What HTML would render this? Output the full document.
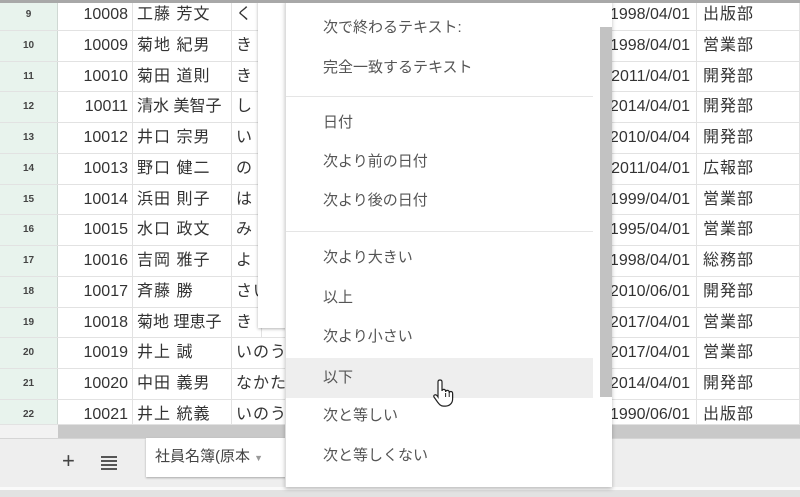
<!DOCTYPE html>
<html><head><meta charset="utf-8"><style>
*{margin:0;padding:0;box-sizing:border-box}
body{width:800px;height:497px;overflow:hidden;background:#fff;position:relative;font-family:"Liberation Sans","Noto Sans CJK JP",sans-serif;color:#333}
.topb{position:absolute;left:0;top:0;width:800px;height:3px;background:#a8a8a8;z-index:5}
.row{position:absolute;left:0;width:800px;height:30.77px;border-bottom:1px solid #e2e2e2;font-size:16px}
.row div{position:absolute;top:0;height:100%;line-height:30px;border-right:1px solid #e2e2e2;white-space:nowrap;overflow:hidden}
.rh{left:0;width:58px;background:#e8f3ed;text-align:center;font-size:10px!important;color:#444;font-weight:bold;border-right:1px solid #cfd8d3!important}
.id{left:58px;width:75px;text-align:right;padding-right:4px}
.nm{left:133px;width:99px;padding-left:4px;letter-spacing:1px}
.kn{left:232px;width:30px;padding-left:4px;letter-spacing:1px}
.dt{left:560px;width:137px}
.dt span{position:absolute;right:6px;top:0}
.dp{left:697px;width:103px;padding-left:6px;letter-spacing:1px}
.hs{position:absolute;left:0;top:425px;width:800px;height:13px;background:#f2f2f2}
.hs i{position:absolute;left:58px;top:0;width:742px;height:13px;background:#c9c9c9}
.tabs{position:absolute;left:0;top:438px;width:800px;height:50px;background:#eeeeee;border-top:1px solid #d5d5d5}
.bb{position:absolute;left:0;top:487px;width:800px;height:10px;background:#e2e2e2;border-top:3px solid #fafafa}
.tab{position:absolute;left:146px;top:438px;width:140px;height:39px;background:#fff;box-shadow:0 1px 2px rgba(0,0,0,.3);font-size:15px;line-height:38px;padding-left:9px;color:#444}
.back{position:absolute;left:258px;top:0;width:40px;height:328px;background:#fff;box-shadow:0 1px 3px rgba(0,0,0,.3)}
.menu{position:absolute;left:285px;top:0;width:327px;height:487px;background:#fff;border-left:1px solid #ddd;box-shadow:0 2px 4px rgba(0,0,0,.25);z-index:3}
.mi{position:absolute;left:0;width:307px;height:40px;line-height:40px;padding-left:37px;font-size:15px;color:#555}
.hr{position:absolute;left:0;width:307px;height:1px;background:#e5e5e5}
.sb{position:absolute;left:314px;top:27px;width:12px;height:370px;background:#c2c2c2}
</style></head><body>
<div class="topb"></div>
<div class="row" style="top:0"><div class="rh">9</div><div class="id">10008</div><div class="nm">工藤 芳文</div><div class="kn">く</div><div class="dt"><span>1998/04/01</span></div><div class="dp">出版部</div></div>
<div class="row" style="top:30.77px"><div class="rh">10</div><div class="id">10009</div><div class="nm">菊地 紀男</div><div class="kn">き</div><div class="dt"><span>1998/04/01</span></div><div class="dp">営業部</div></div>
<div class="row" style="top:61.54px"><div class="rh">11</div><div class="id">10010</div><div class="nm">菊田 道則</div><div class="kn">き</div><div class="dt"><span>2011/04/01</span></div><div class="dp">開発部</div></div>
<div class="row" style="top:92.31px"><div class="rh">12</div><div class="id">10011</div><div class="nm" style="letter-spacing:0">清水 美智子</div><div class="kn">し</div><div class="dt"><span>2014/04/01</span></div><div class="dp">開発部</div></div>
<div class="row" style="top:123.08px"><div class="rh">13</div><div class="id">10012</div><div class="nm">井口 宗男</div><div class="kn">い</div><div class="dt"><span>2010/04/04</span></div><div class="dp">開発部</div></div>
<div class="row" style="top:153.85px"><div class="rh">14</div><div class="id">10013</div><div class="nm">野口 健二</div><div class="kn">の</div><div class="dt"><span>2011/04/01</span></div><div class="dp">広報部</div></div>
<div class="row" style="top:184.62px"><div class="rh">15</div><div class="id">10014</div><div class="nm">浜田 則子</div><div class="kn">は</div><div class="dt"><span>1999/04/01</span></div><div class="dp">営業部</div></div>
<div class="row" style="top:215.39px"><div class="rh">16</div><div class="id">10015</div><div class="nm">水口 政文</div><div class="kn">み</div><div class="dt"><span>1995/04/01</span></div><div class="dp">営業部</div></div>
<div class="row" style="top:246.16px"><div class="rh">17</div><div class="id">10016</div><div class="nm">吉岡 雅子</div><div class="kn">よ</div><div class="dt"><span>1998/04/01</span></div><div class="dp">総務部</div></div>
<div class="row" style="top:276.93px"><div class="rh">18</div><div class="id">10017</div><div class="nm">斉藤 勝</div><div class="kn">さい</div><div class="dt"><span>2010/06/01</span></div><div class="dp">開発部</div></div>
<div class="row" style="top:307.7px"><div class="rh">19</div><div class="id">10018</div><div class="nm" style="letter-spacing:0">菊地 理恵子</div><div class="kn">き</div><div class="dt"><span>2017/04/01</span></div><div class="dp">営業部</div></div>
<div class="row" style="top:338.47px"><div class="rh">20</div><div class="id">10019</div><div class="nm">井上 誠</div><div class="kn" style="width:60px">いのう</div><div class="dt"><span>2017/04/01</span></div><div class="dp">営業部</div></div>
<div class="row" style="top:369.24px"><div class="rh">21</div><div class="id">10020</div><div class="nm">中田 義男</div><div class="kn" style="width:60px">なかた</div><div class="dt"><span>2014/04/01</span></div><div class="dp">開発部</div></div>
<div class="row" style="top:400px;height:25px;overflow:hidden"><div class="rh">22</div><div class="id">10021</div><div class="nm">井上 統義</div><div class="kn" style="width:60px">いのう</div><div class="dt"><span>1990/06/01</span></div><div class="dp">出版部</div></div>
<div class="hs"><i></i></div>
<div class="tabs"></div>
<div style="position:absolute;left:62px;top:448px;font-size:22px;color:#444;line-height:26px">+</div>
<div style="position:absolute;left:101px;top:456px;width:16px">
<div style="height:2px;background:#555;margin-bottom:2px"></div><div style="height:2px;background:#555;margin-bottom:2px"></div><div style="height:2px;background:#555;margin-bottom:2px"></div><div style="height:2px;background:#555"></div></div>
<div class="tab">社員名簿(原本 <span style="font-size:9px;color:#999">▼</span></div>
<div class="bb"></div>
<div class="back"></div>
<div class="menu">
<div class="mi" style="top:8px">次で終わるテキスト:</div>
<div class="mi" style="top:48px">完全一致するテキスト</div>
<div class="hr" style="top:96px"></div>
<div class="mi" style="top:103px">日付</div>
<div class="mi" style="top:142px">次より前の日付</div>
<div class="mi" style="top:181px">次より後の日付</div>
<div class="hr" style="top:231px"></div>
<div class="mi" style="top:238px">次より大きい</div>
<div class="mi" style="top:278px">以上</div>
<div class="mi" style="top:317px">次より小さい</div>
<div class="mi" style="top:358px;background:#eeeeee">以下</div>
<div class="mi" style="top:396px">次と等しい</div>
<div class="mi" style="top:436px">次と等しくない</div>
<div class="sb"></div>
<svg style="position:absolute;left:147px;top:378px" width="24" height="30" viewBox="0 0 24 30"><path d="M7 2c1.2 0 2 .8 2 2v9c0-1 .8-1.6 1.8-1.6s1.8.7 1.8 1.6v1c0-1 .8-1.6 1.8-1.6s1.8.7 1.8 1.6v1c0-1 .8-1.5 1.7-1.5s1.7.7 1.7 1.6v6c0 4-3 7-7 7h-2c-3 0-4.5-2-6-4L1 19c-.6-1 0-2 1-2.2 1-.2 1.8.5 2.4 1.3L5 19V4c0-1.2.8-2 2-2z" fill="#fff" stroke="#222" stroke-width="1.2"/><path d="M12.6 15v4M16.2 15v4M19.6 16v4" stroke="#222" stroke-width="1"/></svg>
</div>
</body></html>
